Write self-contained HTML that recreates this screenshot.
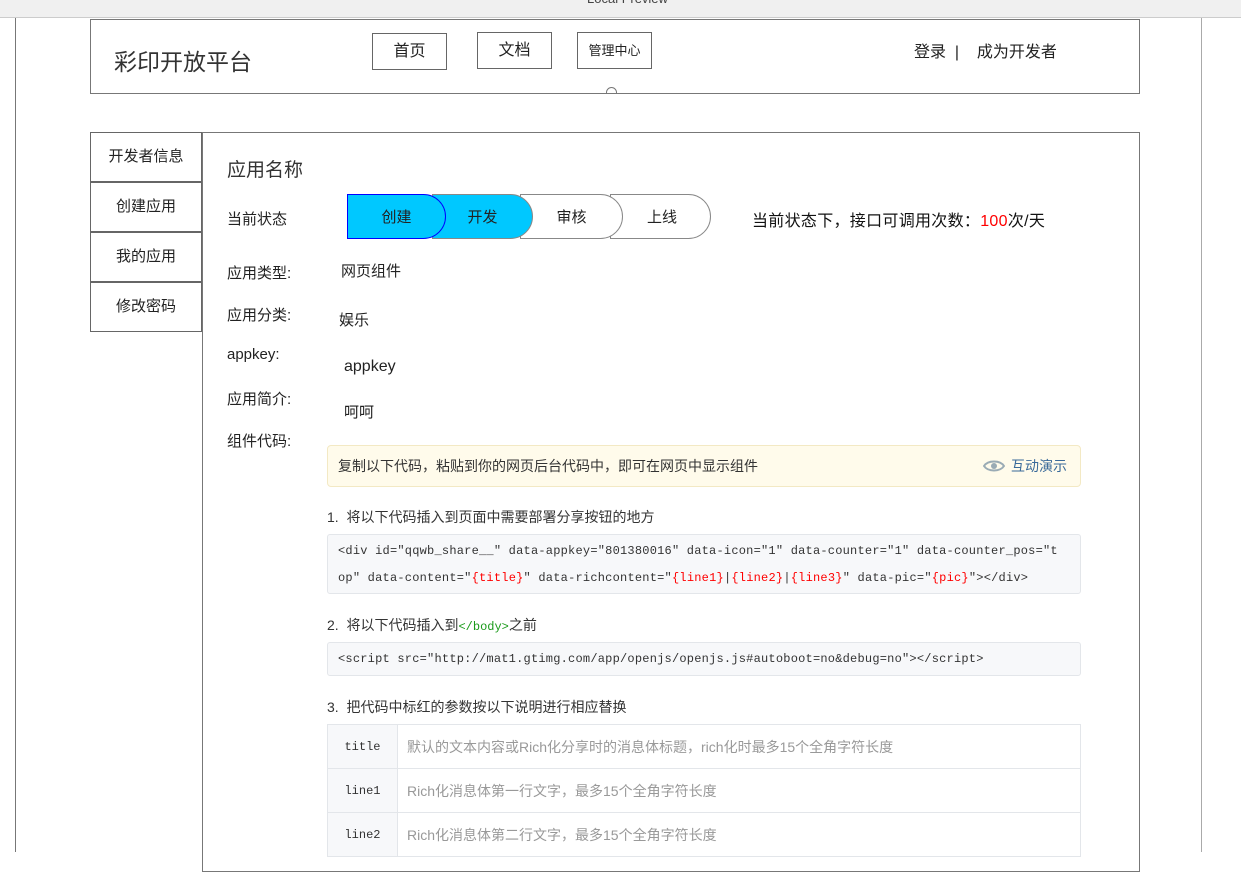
<!DOCTYPE html>
<html><head><meta charset="utf-8"><style>
*{margin:0;padding:0;box-sizing:border-box}
body{width:1241px;height:852px;overflow:hidden;background:#fff;font-family:"Liberation Sans","Noto Sans CJK SC",sans-serif;color:#222;position:relative}
.a{position:absolute}
.bx{position:absolute;border:1px solid #777;background:#fff}
.nav{position:absolute;border:1px solid #666;font-size:16px;text-align:center;line-height:36px;height:37px}
.side{position:absolute;left:90px;width:112px;height:50px;border:1px solid #666;font-size:15px;text-align:center;line-height:48px}
.pill{position:absolute;top:194px;height:45px;border:1px solid #888;border-radius:0 23px 23px 0;font-size:15px;line-height:45px;text-align:center}
.lbl{position:absolute;left:227px;font-size:15px}
.code{position:absolute;left:327px;width:754px;background:#f7f8fa;border:1px solid #e3e6ea;border-radius:3px;font-family:"Liberation Mono","Noto Sans CJK SC",monospace;font-size:12px;letter-spacing:0.22px;color:#333;padding:0 10px;white-space:nowrap}
.r{color:#f00}
td{border:1px solid #e3e6ea;height:44px;font-size:14px;color:#999;padding-left:9px}
td.k{background:#f7f8fa;color:#333;font-family:"Liberation Mono",monospace;font-size:12px;text-align:center;width:70px;padding:0}
</style></head><body>
<div class="a" style="left:0;top:0;width:1241px;height:18px;background:#f0f0f0;border-bottom:1px solid #ccc"></div>
<div class="a" style="left:587px;top:-9px;font-size:13px;color:#444">Local Preview</div>
<div class="a" style="left:15px;top:18px;width:1187px;height:834px;border-left:1px solid #777;border-right:1px solid #aaa"></div>
<div class="bx" style="left:90px;top:19px;width:1050px;height:75px"></div>
<div class="a" style="left:606px;top:87px;width:11px;height:11px;border:1px solid #777;border-radius:50%;background:#fff;clip-path:inset(0 0 5px 0)"></div>
<div class="a" style="left:114px;top:43px;font-size:23px;color:#333">彩印开放平台</div>
<div class="nav" style="left:372px;top:33px;width:75px">首页</div>
<div class="nav" style="left:477px;top:32px;width:75px">文档</div>
<div class="nav" style="left:577px;top:32px;width:75px;font-size:13px">管理中心</div>
<div class="a" style="left:914px;top:38px;font-size:16px">登录 &nbsp;|&nbsp;&nbsp;&nbsp; 成为开发者</div>
<div class="bx" style="left:202px;top:132px;width:938px;height:740px"></div>
<div class="side" style="top:132px">开发者信息</div>
<div class="side" style="top:182px">创建应用</div>
<div class="side" style="top:232px">我的应用</div>
<div class="side" style="top:282px">修改密码</div>
<div class="a" style="left:227px;top:155px;font-size:19px;color:#333">应用名称</div>
<div class="lbl" style="top:208px">当前状态</div>
<div class="pill" style="left:610px;width:101px;padding-left:3px">上线</div>
<div class="pill" style="left:520px;width:103px;background:#fff">审核</div>
<div class="pill" style="left:432px;width:101px;background:#00c8ff;padding-left:0">开发</div>
<div class="pill" style="left:347px;width:99px;background:#00c8ff;border-color:#00f">创建</div>
<div class="a" style="left:752px;top:207px;font-size:16px;color:#111;letter-spacing:0.3px">当前状态下，接口可调用次数：<span style="color:#f00">100</span>次/天</div>
<div class="lbl" style="top:262px">应用类型:</div><div class="a" style="left:341px;top:260px;font-size:15px">网页组件</div>
<div class="lbl" style="top:304px">应用分类:</div><div class="a" style="left:339px;top:309px;font-size:15px">娱乐</div>
<div class="lbl" style="top:346px">appkey:</div><div class="a" style="left:344px;top:358px;font-size:16px">appkey</div>
<div class="lbl" style="top:388px">应用简介:</div><div class="a" style="left:344px;top:401px;font-size:15px">呵呵</div>
<div class="lbl" style="top:430px">组件代码:</div>
<div class="a" style="left:327px;top:445px;width:754px;height:42px;background:#fffbeb;border:1px solid #f3e9c4;border-radius:4px;font-size:14px;color:#333;line-height:40px;padding-left:10px">复制以下代码，粘贴到你的网页后台代码中，即可在网页中显示组件
<span class="a" style="right:13px;top:0;color:#3a6a9a"><svg width="22" height="14" viewBox="0 0 22 14" style="vertical-align:-2px;margin-right:6px"><path d="M1 7C5 1 17 1 21 7C17 13 5 13 1 7Z" fill="none" stroke="#9aabb5" stroke-width="2"/><circle cx="11" cy="7" r="3" fill="#9aabb5"/></svg>互动演示</span></div>
<div class="a" style="left:327px;top:507px;font-size:14px;color:#333">1.&nbsp; 将以下代码插入到页面中需要部署分享按钮的地方</div>
<div class="code" style="top:534px;height:60px;line-height:27px;padding-top:3px">&lt;div id="qqwb_share__" data-appkey="801380016" data-icon="1" data-counter="1" data-counter_pos="t<br>op" data-content="<span class="r">{title}</span>" data-richcontent="<span class="r">{line1}</span>|<span class="r">{line2}</span>|<span class="r">{line3}</span>" data-pic="<span class="r">{pic}</span>"&gt;&lt;/div&gt;</div>
<div class="a" style="left:327px;top:615px;font-size:14px;color:#333">2.&nbsp; 将以下代码插入到<span style="color:#1a9a1a;font-family:'Liberation Mono',monospace;font-size:12px">&lt;/body&gt;</span>之前</div>
<div class="code" style="top:642px;height:34px;line-height:32px">&lt;script src="http://mat1.gtimg.com/app/openjs/openjs.js#autoboot=no&amp;debug=no"&gt;&lt;/script&gt;</div>
<div class="a" style="left:327px;top:697px;font-size:14px;color:#333">3.&nbsp; 把代码中标红的参数按以下说明进行相应替换</div>
<table class="a" style="left:327px;top:724px;width:754px;border-collapse:collapse">
<tr><td class="k">title</td><td>默认的文本内容或Rich化分享时的消息体标题，rich化时最多15个全角字符长度</td></tr>
<tr><td class="k">line1</td><td>Rich化消息体第一行文字，最多15个全角字符长度</td></tr>
<tr><td class="k">line2</td><td>Rich化消息体第二行文字，最多15个全角字符长度</td></tr>
</table>
</body></html>
